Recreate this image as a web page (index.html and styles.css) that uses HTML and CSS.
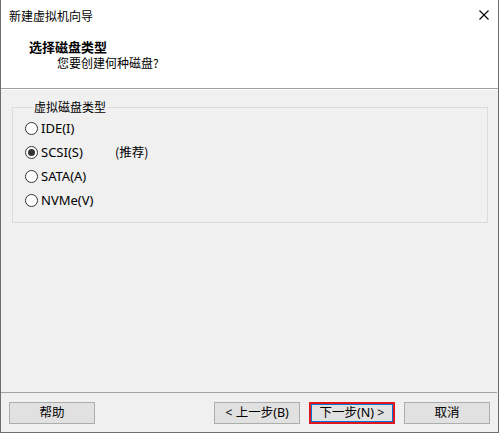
FILE: index.html
```html
<!DOCTYPE html>
<html lang="zh-CN">
<head>
<meta charset="utf-8">
<title>新建虚拟机向导</title>
<link rel="stylesheet" href="styles.css">
</head>
<body>
<div class="window">
  <div class="titlebar">
    <span class="title">新建虚拟机向导</span>
    <svg class="close" width="10" height="10" viewBox="0 0 10 10"><path d="M0.5 0.5 L9.5 9.5 M9.5 0.5 L0.5 9.5" stroke="#000" stroke-width="1.1" fill="none"/></svg>
  </div>
  <div class="header">
    <div class="h-title">选择磁盘类型</div>
    <div class="h-sub">您要创建何种磁盘?</div>
  </div>
  <div class="content">
    <fieldset class="group">
      <legend>虚拟磁盘类型</legend>
      <div class="opt"><span class="radio"></span><span class="name">IDE(I)</span></div>
      <div class="opt"><span class="radio checked"></span><span class="name">SCSI(S)</span><span class="rec">(推荐)</span></div>
      <div class="opt"><span class="radio"></span><span class="name">SATA(A)</span></div>
      <div class="opt"><span class="radio"></span><span class="name">NVMe(V)</span></div>
    </fieldset>
  </div>
  <div class="footer">
    <button class="btn">帮助</button>
    <div class="spacer"></div>
    <button class="btn">&lt; 上一步(B)</button>
    <button class="btn default">下一步(N) &gt;</button>
    <button class="btn">取消</button>
  </div>
</div>
</body>
</html>
```

FILE: styles.css
```css
html, body {
  margin: 0;
  padding: 0;
  background: #f0f0f0;
}
body {
  font-family: "Noto Sans", "Noto Sans CJK SC", sans-serif;
  font-size: 12px;
  color: #000;
}
.window {
  width: 499px;
  height: 433px;
  box-sizing: border-box;
  border: 1px solid #6e6e6e;
  border-top: none;
  background: #f0f0f0;
  display: flex;
  flex-direction: column;
}
.titlebar {
  height: 31px;
  background: #fff;
  display: flex;
  align-items: center;
  justify-content: space-between;
  padding: 0 9px 0 8px;
  flex: none;
}
.title {
  font-family: "Noto Sans CJK SC", sans-serif;
  font-size: 12px;
  line-height: 16px;
}
.close {
  display: block;
  margin-bottom: 1px;
}
.header {
  height: 58px;
  background: #fff;
  border-bottom: 1px solid #a0a0a0;
  box-shadow: 0 1px 0 #ffffff;
  padding: 8px 0 0 28px;
  box-sizing: border-box;
  flex: none;
}
.h-title {
  font-family: "Noto Sans CJK SC", sans-serif;
  font-weight: bold;
  font-size: 13px;
  line-height: 16px;
}
.h-sub {
  font-family: "Noto Sans CJK SC", sans-serif;
  font-size: 12px;
  line-height: 16px;
  padding-left: 28px;
}
.content {
  flex: 1;
  padding: 10px 10px 0 11px;
}
.group {
  margin: 0;
  border: 1px solid #dcdcdc;
  padding: 1px 0 10px 12px;
  display: flex;
  flex-direction: column;
}
.group legend {
  font-family: "Noto Sans CJK SC", sans-serif;
  line-height: 16px;
  padding: 0 1px;
  margin-left: 8px;
}
.opt {
  height: 24px;
  display: flex;
  align-items: center;
}
.radio {
  width: 13px;
  height: 13px;
  box-sizing: border-box;
  border: 1px solid #333;
  border-radius: 50%;
  background: #fff;
  margin-right: 3px;
  display: flex;
  align-items: center;
  justify-content: center;
}
.radio.checked::after {
  content: "";
  width: 7px;
  height: 7px;
  border-radius: 50%;
  background: #333;
}
.name {
  width: 74px;
  font-size: 13px;
  line-height: 16px;
}
.rec {
  font-family: "Noto Sans CJK SC", sans-serif;
  line-height: 16px;
  font-size: 12.5px;
}
.footer {
  flex: none;
  height: 40px;
  box-sizing: border-box;
  border-top: 1px solid #a0a0a0;
  margin-right: 1px;
  padding: 9px 7px 0 8px;
  display: flex;
  align-items: flex-start;
  gap: 9px;
}
.spacer {
  flex: 1;
}
.btn {
  width: 86px;
  height: 22px;
  box-sizing: border-box;
  border: 1px solid #adadad;
  background: #e1e1e1;
  font-family: "Noto Sans", "Noto Sans CJK SC", sans-serif;
  font-size: 12.5px;
  color: #000;
  padding: 0;
  margin: 0;
  line-height: 18px;
}
.btn.default {
  border: 2px solid #e0161f;
  box-shadow: inset 0 0 0 1px #0078d7;
}
```
